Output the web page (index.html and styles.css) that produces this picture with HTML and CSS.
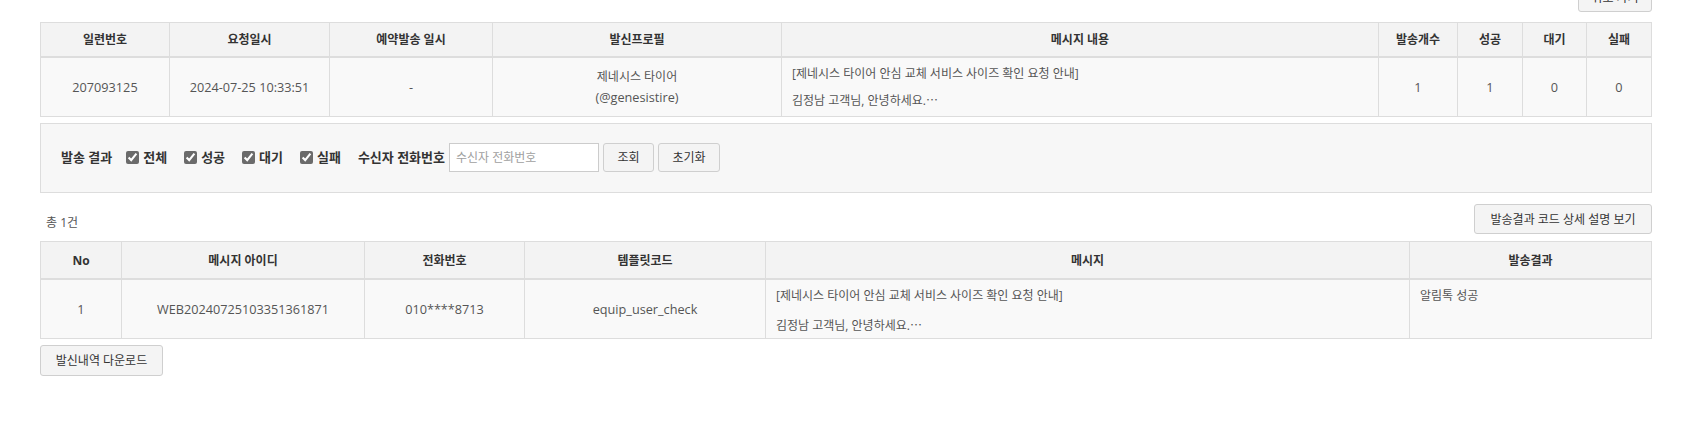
FILE: index.html
```html
<!DOCTYPE html>
<html lang="ko">
<head>
<meta charset="utf-8">
<title>발송 상세</title>
<link rel="stylesheet" href="styles.css">
</head>
<body>
<div class="page">
  <div class="top-actions">
    <button class="btn btn-top" type="button">뒤로 가기</button>
  </div>

  <table class="grid grid-summary">
    <colgroup>
      <col class="c-129"><col class="c-160"><col class="c-163"><col class="c-289"><col><col class="c-79"><col class="c-65"><col class="c-64"><col class="c-65">
    </colgroup>
    <thead>
      <tr>
        <th>일련번호</th>
        <th>요청일시</th>
        <th>예약발송 일시</th>
        <th>발신프로필</th>
        <th>메시지 내용</th>
        <th>발송개수</th>
        <th>성공</th>
        <th>대기</th>
        <th>실패</th>
      </tr>
    </thead>
    <tbody>
      <tr>
        <td class="center en">207093125</td>
        <td class="center en">2024-07-25 10:33:51</td>
        <td class="center en">-</td>
        <td class="center profile">제네시스 타이어<br><span class="en">(@genesistire)</span></td>
        <td class="msg">
          <div class="msg-line">[제네시스 타이어 안심 교체 서비스 사이즈 확인 요청 안내]</div>
          <div class="msg-line msg-next">김정남 고객님, 안녕하세요.⋯</div>
        </td>
        <td class="center en">1</td>
        <td class="center en">1</td>
        <td class="center en">0</td>
        <td class="center en">0</td>
      </tr>
    </tbody>
  </table>

  <div class="filter">
    <span class="f-label">발송 결과</span>
    <label class="chk"><input type="checkbox" checked><span>전체</span></label>
    <label class="chk"><input type="checkbox" checked><span>성공</span></label>
    <label class="chk"><input type="checkbox" checked><span>대기</span></label>
    <label class="chk"><input type="checkbox" checked><span>실패</span></label>
    <span class="f-label f-phone">수신자 전화번호</span>
    <input class="phone" type="text" placeholder="수신자 전화번호">
    <button class="btn btn-sm btn-search" type="button">조회</button>
    <button class="btn btn-sm btn-reset" type="button">초기화</button>
  </div>

  <div class="result-bar">
    <span class="count">총 1건</span>
    <button class="btn btn-code" type="button">발송결과 코드 상세 설명 보기</button>
  </div>

  <table class="grid grid-detail">
    <colgroup>
      <col class="c-81"><col class="c-243"><col class="c-160"><col class="c-241"><col><col class="c-242">
    </colgroup>
    <thead>
      <tr>
        <th>No</th>
        <th>메시지 아이디</th>
        <th>전화번호</th>
        <th>템플릿코드</th>
        <th>메시지</th>
        <th>발송결과</th>
      </tr>
    </thead>
    <tbody>
      <tr>
        <td class="center en">1</td>
        <td class="center en">WEB20240725103351361871</td>
        <td class="center en">010****8713</td>
        <td class="center en">equip_user_check</td>
        <td class="msg msg2">
          <div class="msg-line">[제네시스 타이어 안심 교체 서비스 사이즈 확인 요청 안내]</div>
          <div class="msg-line msg-next2">김정남 고객님, 안녕하세요.⋯</div>
        </td>
        <td class="status">알림톡 성공</td>
      </tr>
    </tbody>
  </table>

  <div class="bottom-actions">
    <button class="btn btn-download" type="button">발신내역 다운로드</button>
  </div>
</div>
</body>
</html>
```

FILE: styles.css
```css
html, body {
  margin: 0;
  background: #fff;
}

body {
  font-family: "Open Sans", "Noto Sans CJK KR", sans-serif;
  font-size: 12px;
  line-height: 17px;
  color: #333;
}

.page {
  padding: 0 36px 0 40px;
}

.en {
  font-size: 12.7px;
}

/* buttons */
.btn {
  font-family: inherit;
  font-size: 12px;
  color: #333;
  background: #f4f4f4;
  border: 1px solid #cfcfcf;
  border-radius: 3px;
  height: 30px;
  padding: 0 12px;
  line-height: 17px;
  cursor: pointer;
}

.top-actions {
  display: flex;
  justify-content: flex-end;
  margin-top: -18px;
  margin-bottom: 10px;
}

.btn-top {
  width: 74px;
  padding: 0;
}

/* tables */
.grid {
  width: 100%;
  border-collapse: collapse;
  table-layout: fixed;
}

.grid th,
.grid td {
  border: 1px solid #ddd;
}

.grid th {
  background: #f3f3f3;
  font-weight: bold;
  color: #333;
  text-align: center;
  padding: 8px 6px;
  border-bottom: 2px solid #ddd;
}

.grid td {
  background: #f9f9f9;
  color: #555;
  padding: 7px 10px;
  vertical-align: middle;
}

.grid-detail th {
  padding: 10px 6px 9px;
}

.c-129 { width: 129px; }
.c-160 { width: 160px; }
.c-163 { width: 163px; }
.c-289 { width: 289px; }
.c-79 { width: 79px; }
.c-65 { width: 65px; }
.c-64 { width: 64px; }
.c-81 { width: 81px; }
.c-243 { width: 243px; }
.c-241 { width: 241px; }
.c-242 { width: 242px; }

.grid .center {
  text-align: center;
}

.grid .profile {
  line-height: 21px;
}

.grid .msg {
  text-align: left;
}

.msg-next {
  margin-top: 10px;
}

.grid .msg2 {
  padding-bottom: 4px;
}

.msg-next2 {
  margin-top: 13px;
}

.grid .status {
  vertical-align: top;
  text-align: left;
}

/* filter */
.filter {
  margin-top: 6px;
  display: flex;
  align-items: center;
  background: #f7f7f7;
  border: 1px solid #ddd;
  padding: 19px 20px 20px;
}

.f-label {
  font-size: 13px;
  font-weight: bold;
  color: #333;
}

.chk {
  display: inline-flex;
  align-items: center;
  margin-left: 14px;
  font-size: 13px;
  font-weight: bold;
  color: #333;
}

.chk + .chk {
  margin-left: 17px;
}

.chk input {
  width: 13px;
  height: 13px;
  margin: 0 4px 0 0;
  accent-color: #6b6b6b;
}

.f-phone {
  margin-left: 17px;
  margin-right: 4px;
}

.phone {
  width: 150px;
  height: 29px;
  box-sizing: border-box;
  border: 1px solid #ccc;
  background: #fff;
  padding: 0 6px;
  font-family: inherit;
  font-size: 12px;
  color: #555;
}

.phone::placeholder {
  color: #a0a0a0;
}

.btn-sm {
  height: 29px;
  margin-left: 4px;
  padding: 0;
}

.btn-search { width: 51px; }
.btn-reset { width: 62px; }

/* result bar */
.result-bar {
  display: flex;
  justify-content: space-between;
  align-items: flex-end;
  margin-top: 11px;
  margin-bottom: 7px;
}

.count {
  margin-left: 6px;
  padding-bottom: 3px;
  color: #555;
}

.btn-code {
  width: 178px;
  padding: 0;
}

/* bottom */
.bottom-actions {
  margin-top: 6px;
}

.btn-download {
  width: 123px;
  height: 31px;
  padding: 0;
}
```
